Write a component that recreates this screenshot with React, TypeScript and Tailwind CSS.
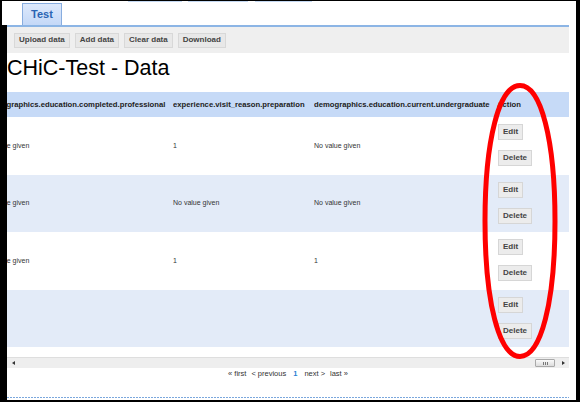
import React from "react";

interface DataRow {
  id: number;
  completed: string;
  preparation: string;
  undergraduate: string;
}

const rows: DataRow[] = [
  { id: 1, completed: "No value given", preparation: "1", undergraduate: "No value given" },
  { id: 2, completed: "No value given", preparation: "No value given", undergraduate: "No value given" },
  { id: 3, completed: "No value given", preparation: "1", undergraduate: "1" },
  { id: 4, completed: "", preparation: "", undergraduate: "" },
];

const toolbarActions = ["Upload data", "Add data", "Clear data", "Download"];

const font = "font-['Liberation_Sans',Arial,sans-serif]";

const SmallButton = ({ label }: { label: string }) => (
  <button className="h-[16px] px-[4px] bg-[#ececec] border border-[#d6d6d6] text-[8px] font-bold text-[#444] leading-none">
    {label}
  </button>
);

const ToolbarButton = ({ label }: { label: string }) => (
  <button className="h-[15px] px-[4px] bg-[#e8e8e8] border border-[#d8d8d8] text-[8px] font-bold text-[#444] leading-none">
    {label}
  </button>
);

const Scrollbar = () => (
  <div className="mt-[10px] h-[11px] bg-[#eeeeee] border-t border-[#dedede] flex items-center">
    <div className="ml-[5px] w-0 h-0 border-y-[2.5px] border-y-transparent border-r-[3px] border-r-[#333]" />
    <div className="flex-1" />
    <div className="w-[20px] h-[8px] mr-[7px] rounded-[1px] border border-[#a9a9a9] bg-[linear-gradient(#fafafa,#dcdcdc)] flex items-center justify-center gap-[1px]">
      <span className="w-[1px] h-[3px] bg-[#777]" />
      <span className="w-[1px] h-[3px] bg-[#777]" />
      <span className="w-[1px] h-[3px] bg-[#777]" />
    </div>
    <div className="mr-[4px] w-0 h-0 border-y-[2.5px] border-y-transparent border-l-[3px] border-l-[#333]" />
  </div>
);

const Pager = () => (
  <div className="h-[11px] flex items-center justify-center gap-[5px] text-[7.5px] text-[#333] leading-[11px]">
    <span>« first</span>
    <span>&lt; previous</span>
    <span className="px-[2px] font-bold text-[#2a7fd4]">1</span>
    <span>next &gt;</span>
    <span>last »</span>
  </div>
);

const Annotation = () => {
  // hand-drawn style oval around the action column
  const cx = 520;
  const cy = 221;
  const rx = 35;
  const ry = 135.5;
  const k = 0.6;
  const d = `M ${cx} ${cy - ry}
    C ${cx + k * rx} ${cy - ry} ${cx + rx} ${cy - k * ry} ${cx + rx} ${cy}
    C ${cx + rx} ${cy + k * ry} ${cx + k * rx} ${cy + ry} ${cx} ${cy + ry}
    C ${cx - k * rx} ${cy + ry} ${cx - rx} ${cy + k * ry} ${cx - rx} ${cy}
    C ${cx - rx} ${cy - k * ry} ${cx - k * rx} ${cy - ry} ${cx} ${cy - ry} Z`;
  return (
    <svg className="absolute left-0 top-0 pointer-events-none" width={580} height={402}>
      <path d={d} fill="none" stroke="#ff0000" strokeWidth={5} />
    </svg>
  );
};

export default function App() {
  return (
    <div className={`relative w-[580px] h-[402px] bg-black pt-[1px] pl-[2px] pr-[4px] pb-[2px] flex flex-col overflow-hidden ${font}`}>
      {/* tab strip */}
      <div className="h-[24px] bg-white flex flex-col">
        <div className="h-[2px] flex">
          <div className="ml-[126px] w-[54px] h-[1px] bg-[#c4d8f2]" />
          <div className="ml-[6px] w-[60px] h-[1px] bg-[#c4d8f2]" />
          <div className="ml-[7px] w-[57px] h-[1px] bg-[#c4d8f2]" />
        </div>
        <div className="ml-[20px] w-[40px] h-[22px] border border-b-0 border-[#88addf] bg-[linear-gradient(#dde9fc,#c4d8f7)] flex items-center justify-center text-[11px] font-bold text-[#2a64b3]">
          Test
        </div>
      </div>

      <div className="flex-1 flex">
        <div className="w-[5px] bg-black" />
        <div className="flex-1 bg-white pr-[7px] flex flex-col">
          <div className="h-[2px] bg-[#8cb5e5]" />

          <div className="h-[26px] bg-[#efefef] flex items-center gap-[5px] pl-[7px]">
            {toolbarActions.map((a) => (
              <ToolbarButton key={a} label={a} />
            ))}
          </div>

          <h1 className="mt-[5px] h-[21px] text-[21.5px] leading-none text-black">CHiC-Test - Data</h1>

          <div className="mt-[13px] w-[562px] overflow-hidden">
            <div className="ml-[-24px] w-[586px]">
              <div className="h-[25px] bg-[#c6daf7] grid grid-cols-[190px_141px_183px_1fr] items-center text-[7.7px] font-bold text-[#222] whitespace-nowrap">
                <div className="pl-[3px] overflow-hidden">demographics.education.completed.professional</div>
                <div className="overflow-hidden">experience.visit_reason.preparation</div>
                <div className="overflow-hidden">demographics.education.current.undergraduate</div>
                <div>Action</div>
              </div>

              {rows.map((row, i) => (
                <div
                  key={row.id}
                  className={`grid grid-cols-[190px_141px_183px_1fr] text-[7px] text-[#333] whitespace-nowrap ${
                    i % 2 === 0 ? "h-[58px] bg-white" : "h-[57px] bg-[#e3ebf8]"
                  }`}
                >
                  <div className="flex items-center overflow-hidden">{row.completed}</div>
                  <div className="flex items-center overflow-hidden">{row.preparation}</div>
                  <div className="flex items-center overflow-hidden">{row.undergraduate}</div>
                  <div className="pt-[7px] pl-[1px] flex flex-col items-start gap-[10px]">
                    <SmallButton label="Edit" />
                    <SmallButton label="Delete" />
                  </div>
                </div>
              ))}
            </div>
          </div>

          <Scrollbar />
          <Pager />

          <div className="mt-auto mb-[2px] h-[1px] bg-[repeating-linear-gradient(90deg,#7aa7dd_0_2px,transparent_2px_3px)]" />
        </div>
      </div>

      <Annotation />
    </div>
  );
}
